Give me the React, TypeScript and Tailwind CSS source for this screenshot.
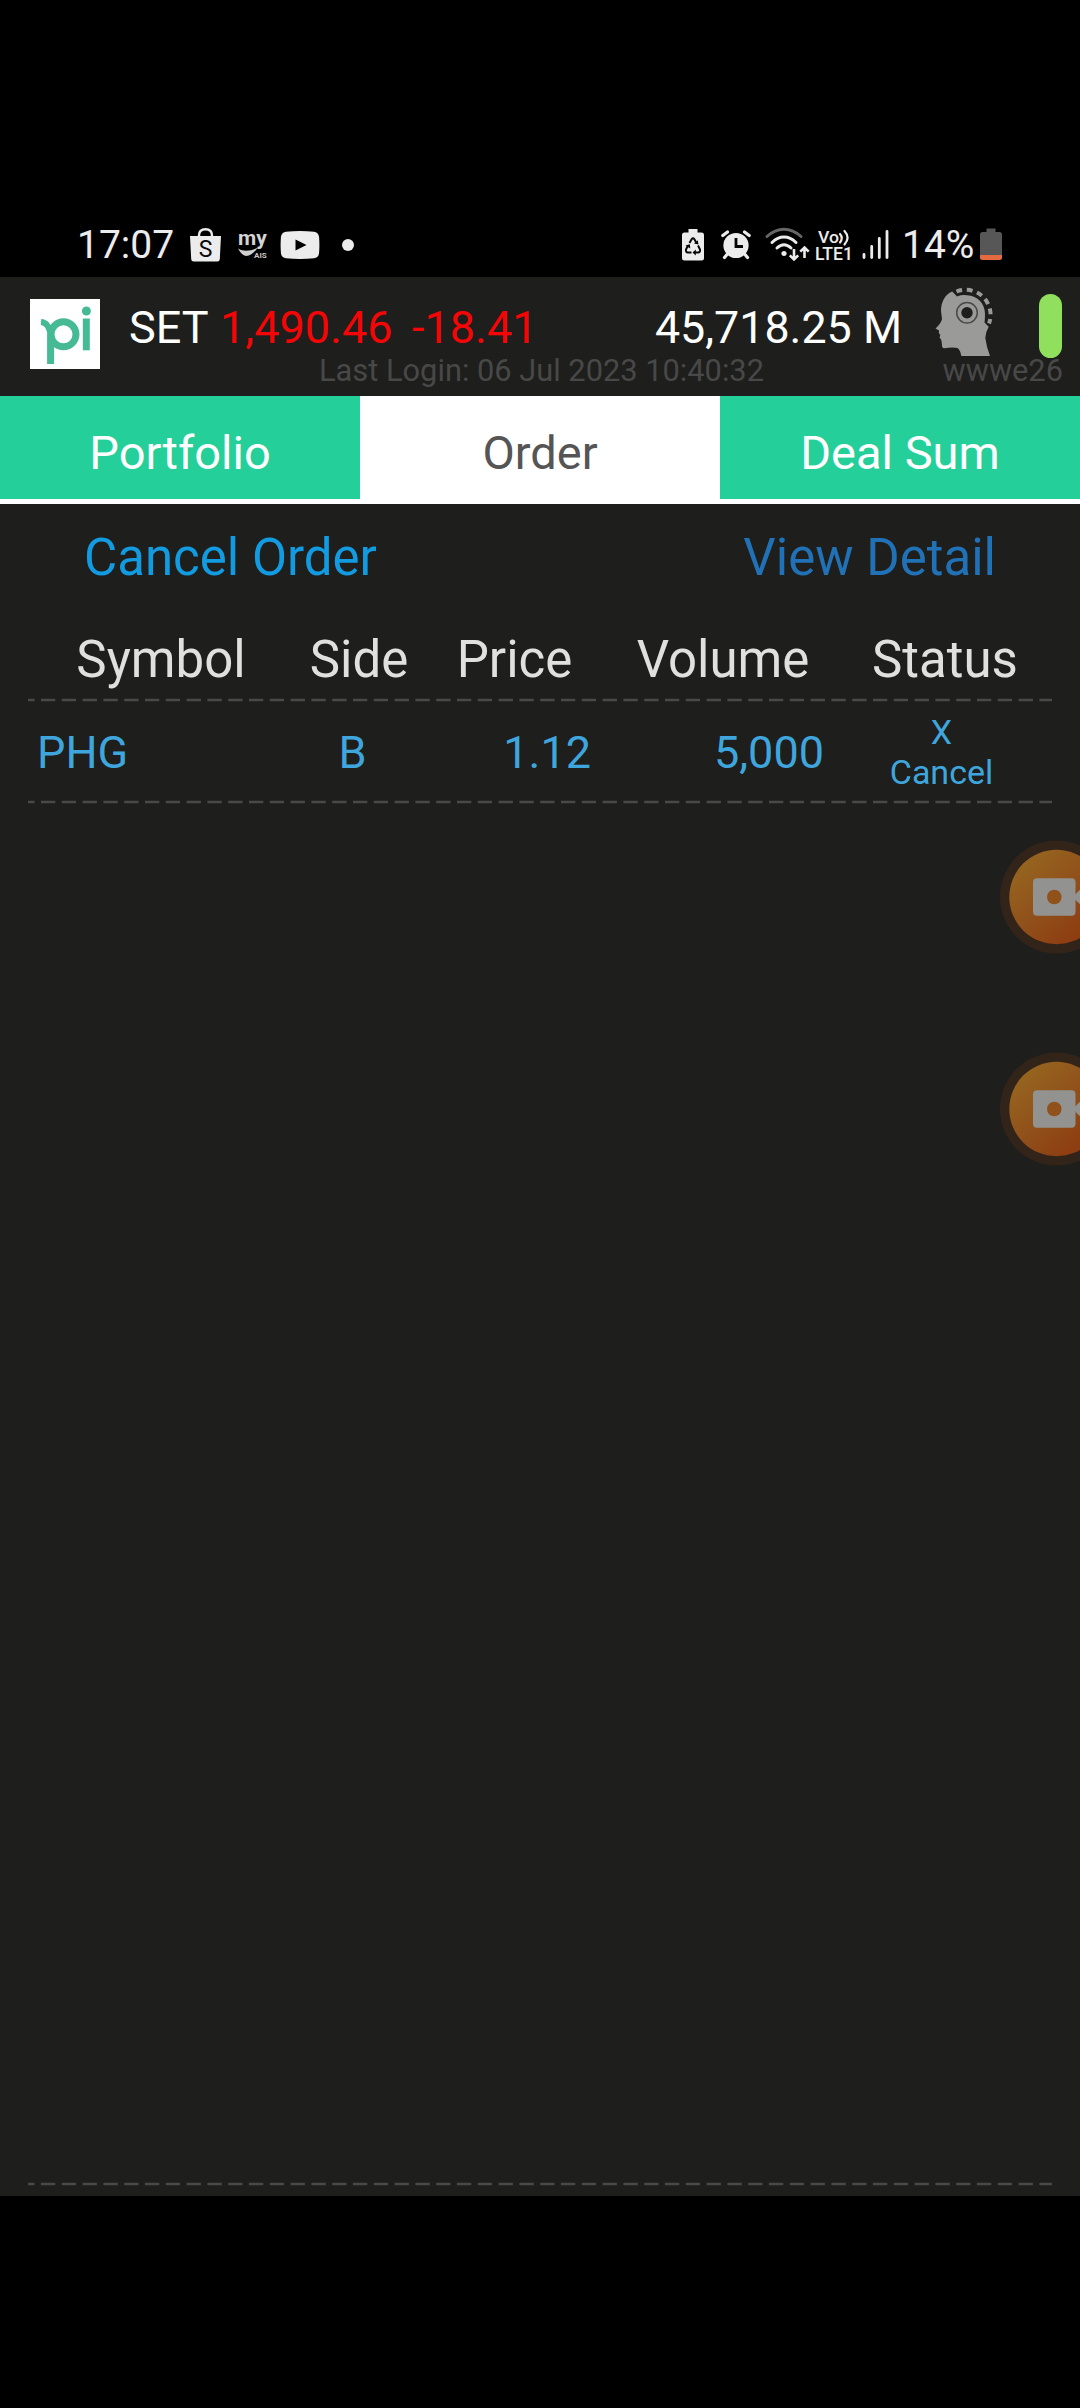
import React from 'react';

interface Order {
  symbol: string;
  side: string;
  price: string;
  volume: string;
  status: string[];
}

const TABS = ['Portfolio', 'Order', 'Deal Sum'];

const ORDERS: Order[] = [
  { symbol: 'PHG', side: 'B', price: '1.12', volume: '5,000', status: ['X', 'Cancel'] },
];

const COLS = 'grid grid-cols-[266px_130px_184px_230px_214px] mx-[28px]';

const ShopIcon = () => (
  <svg width="31" height="48" viewBox="0 0 31 48" className="ml-[17px] shrink-0">
    <path d="M9 17V14.5C9 10.500 11.500 8.200 15.500 8.200S22 10.500 22 14.500V17" fill="none" stroke="#ececec" strokeWidth="2.400" />
    <path d="M0 15h31l-1.200 23.200a2.500 2.500 0 0 1-2.500 2.300H3.700a2.500 2.500 0 0 1-2.500-2.300z" fill="#ececec" />
    <text x="15.500" y="36" textAnchor="middle" fontSize="23" fontFamily="Roboto, sans-serif" fill="#0a0a0a">S</text>
  </svg>
);

const MyAisIcon = () => (
  <svg width="34" height="48" viewBox="-2 0 34 48" className="-mr-[2px] ml-[15px] shrink-0 overflow-visible">
    <text x="0" y="23.500" fontSize="21" fontWeight="700" fontFamily="Roboto, sans-serif" fill="#d4d4d4">my</text>
    <path d="M0 27.500C6 31 13 30 20 26.500C16 32 12 35 8 35C4 34 2 31 0 27.500Z" fill="#d0d0d0" />
    <text x="16" y="37" fontSize="8" fontWeight="700" fontFamily="Roboto, sans-serif" fill="#c8c8c8">AIS</text>
  </svg>
);

const VideoIcon = () => (
  <svg width="40" height="48" viewBox="0 0 40 48" className="ml-[12px] shrink-0">
    <path d="M6 10.700Q20 9.500 34 10.700Q38.300 11.200 39 15.500Q39.800 24 39 32.500Q38.300 36.800 34 37.300Q20 38.500 6 37.300Q1.700 36.800 1 32.500Q.2 24 1 15.500Q1.700 11.200 6 10.700Z" fill="#ececec" />
    <path d="M15.500 18.500L26.500 24L15.500 29.500Z" fill="#000" />
  </svg>
);

const BatteryRecycleIcon = () => (
  <svg width="22" height="48" viewBox="0 0 22 48" className="shrink-0">
    <path d="M6.500 8h9v3.500H19.500a2.500 2.500 0 0 1 2.500 2.500V37a2.500 2.500 0 0 1-2.500 2.500H2.500A2.500 2.500 0 0 1 0 37V14a2.500 2.500 0 0 1 2.500-2.500H6.500z" fill="#ececec" />
    <g fill="none" stroke="#050505" strokeWidth="1.900" strokeLinejoin="round">
      <path d="M7.500 22L9.600 18.200Q11 16.200 12.400 18.200L14.500 22" />
      <path d="M16 24.500L18 28.500Q18.600 31.300 16 31.500H12.500" />
      <path d="M9.500 31.500H6Q3.400 31.300 4 28.500L6 24.500" />
    </g>
    <path d="M12 22.500l4.500 1-.8-4.300zM13.800 28.500v6l-3.300-3zM3.500 24.500l4.300-1.200.5 4.300z" fill="#050505" />
  </svg>
);

const AlarmIcon = () => (
  <svg width="30" height="48" viewBox="0 0 30 48" className="ml-[17px] shrink-0">
    <circle cx="15" cy="24.500" r="12.600" fill="#ececec" />
    <g fill="none" stroke="#ececec" strokeWidth="3.200" strokeLinecap="round">
      <path d="M1.800 14.500L6.500 11M28.200 14.500L23.500 11" />
      <path d="M6 33.500L3.500 36.500M24 33.500L26.500 36.500" />
    </g>
    <path d="M15 17v8.500h7" fill="none" stroke="#050505" strokeWidth="2.800" />
  </svg>
);

const WifiIcon = () => (
  <svg width="45" height="48" viewBox="0 0 45 48" className="ml-[14px] shrink-0">
    <g fill="none" strokeWidth="3" strokeLinecap="round">
      <path d="M2 15.500C12.500 5.800 25.500 5.800 36 15.500" stroke="#666" />
      <path d="M7 21.500C14.500 14.200 23.500 14.200 31 21.500" stroke="#ececec" />
      <path d="M12 27C16.500 22.800 21.500 22.800 26 27" stroke="#ececec" />
    </g>
    <circle cx="19" cy="32.500" r="2.600" fill="#ececec" />
    <g fill="none" stroke="#ececec" strokeWidth="2.600">
      <path d="M29 28v10M24.800 34.300L29 38.500l4.200-4.200" />
      <path d="M39.500 37V27M35.300 30.700l4.200-4.200 4.200 4.200" />
    </g>
  </svg>
);

const VolteIcon = () => (
  <svg width="38" height="48" viewBox="0 0 38 48" className="ml-[5px] shrink-0">
    <g fontFamily="Roboto, sans-serif" fontWeight="500" fill="#ececec">
      <text x="3" y="22" fontSize="17" textLength="21" lengthAdjust="spacingAndGlyphs">Vo</text>
      <text x="0" y="39" fontSize="18" textLength="38" lengthAdjust="spacingAndGlyphs">LTE1</text>
    </g>
    <path d="M25 13Q28.500 17 25 21.500M29.500 10Q35.500 16.500 29.500 23.500" fill="none" stroke="#ececec" strokeWidth="2.200" strokeLinecap="round" />
  </svg>
);

const SignalIcon = () => (
  <svg width="28" height="48" viewBox="0 0 28 48" className="ml-[9px] shrink-0">
    <g stroke="#ececec" strokeWidth="2.800" strokeLinecap="round">
      <path d="M2 33.500V36.500M9.700 25.500V36.500M17.300 17.500V36.500" />
      <path d="M25 10.500V36.500" />
    </g>
  </svg>
);

const BatteryIcon = () => (
  <svg width="22" height="48" viewBox="0 0 22 48" className="shrink-0">
    <path d="M6.500 7.500h9V11H19.500a2.500 2.500 0 0 1 2.500 2.500V34H0V13.500A2.500 2.500 0 0 1 2.500 11H6.500z" fill="#575757" />
    <path d="M0 34h22v2.500a2.500 2.500 0 0 1-2.500 2.500H2.500A2.500 2.500 0 0 1 0 36.500z" fill="#e56a40" />
  </svg>
);

const PiLogo = () => (
  <svg width="70" height="70" viewBox="0 0 70 70" className="shrink-0 bg-white">
    <g fill="none" stroke="#45ba94" strokeWidth="7">
      <circle cx="33.500" cy="35.300" r="12.500" />
      <path d="M20.600 35V65" />
      <path d="M11 23Q18.500 23.500 20.600 35" strokeWidth="6" />
      <path d="M56.300 19.500V51.300" />
    </g>
    <circle cx="56.400" cy="12" r="4.500" fill="#45ba94" />
  </svg>
);

const HeadIcon = () => (
  <svg width="64" height="72" viewBox="0 0 64 72" className="shrink-0">
    <path
      d="M20.200 6.500L25 11.500Q30 9.500 35 10.300C46 10.800 53 19 53 29Q53 34 52.500 37.500L56.700 41.700Q53.500 47 53.300 53Q54.500 62 58 71H29.300Q28.500 65.500 25.700 63Q20 61.800 12.500 63.300Q9.500 63 10 59.500L9.300 55L7.600 52.500L8.300 50L6.800 48L7 45.500L3.500 43.500Q9 38.500 10 34L9 26C9 17 13 9.500 20.200 6.500Z"
      fill="#9a9a98"
    />
    <circle cx="35" cy="27.700" r="10.300" fill="none" stroke="#4a4a49" strokeWidth="1.500" />
    <circle cx="35" cy="27.700" r="5.700" fill="#1e1e1c" />
    <path d="M24.500 6.500A25 25 0 0 1 57 38.500" fill="none" stroke="#9a9a98" strokeWidth="4" strokeDasharray="5.800 4.700" />
  </svg>
);

const RecordBubble = ({ id }: { id: string }) => (
  <svg width="80" height="114" viewBox="0 0 80 114" className="block">
    <defs>
      <linearGradient id={id} x1="0.150" y1="0.100" x2="0.850" y2="0.900">
        <stop offset="0" stopColor="#96651f" />
        <stop offset="0.500" stopColor="#90501a" />
        <stop offset="1" stopColor="#8e3a10" />
      </linearGradient>
    </defs>
    <circle cx="56.500" cy="57" r="56.500" fill="#33241a" />
    <circle cx="56.500" cy="57" r="47.200" fill={`url(#${id})`} />
    <rect x="33" y="38.300" width="42.500" height="37.500" rx="4" fill="#929290" />
    <path d="M74 55.500L84 46V68L74 58.500Z" fill="#929290" />
    <circle cx="54.300" cy="57" r="7.300" fill="#90521a" />
  </svg>
);

const DashedRule = () => (
  <svg width="1024" height="4" viewBox="0 0 1024 4" className="mx-[28px] block">
    <line x1="0" y1="2" x2="1024" y2="2" stroke="#494948" strokeWidth="2.400" strokeDasharray="14.300 6.500" strokeDashoffset="7.800" />
  </svg>
);

const StatusBar = () => (
  <div className="flex h-[277px] items-start bg-black pt-[221px] text-[39px] leading-[48px] text-[#ececec]">
    <div className="flex w-[682px] items-center pl-[77px]">
      <span className="w-[96px] whitespace-nowrap">17:07</span>
      <ShopIcon />
      <MyAisIcon />
      <VideoIcon />
      <span className="ml-[22px] h-[12px] w-[12px] rounded-full bg-[#ececec]" />
    </div>
    <div className="flex items-center">
      <BatteryRecycleIcon />
      <AlarmIcon />
      <WifiIcon />
      <VolteIcon />
      <SignalIcon />
      <span className="ml-[12px] w-[78px] whitespace-nowrap">14%</span>
      <BatteryIcon />
    </div>
  </div>
);

const MarketHeader = () => (
  <header className="relative flex h-[119px] items-start text-[45px] leading-[54px] text-white">
    <div className="flex w-[129px] pt-[22px] pl-[30px]">
      <PiLogo />
    </div>
    <div className="flex w-[803px] items-center justify-between pt-[24px] whitespace-pre">
      <div className="flex">
        <span className="w-[91px]">SET</span>
        <span className="w-[192px] text-[#f40606]">1,490.46</span>
        <span className="text-[#f40606]">-18.41</span>
      </div>
      <span className="pr-[30px] text-[44.8px]">45,718.25 M</span>
    </div>
    <div className="pt-[8px]">
      <HeadIcon />
    </div>
    <div className="mt-[17px] ml-[43px] h-[64px] w-[23px] rounded-[12px] bg-[#90e05e]" />
    {/* session line runs underneath the quote row */}
    <div className="absolute top-[75px] right-[17px] left-[319px] flex justify-between text-[30.8px] leading-[38px] text-[#484848]">
      <span>Last Login: 06 Jul 2023 10:40:32</span>
      <span>wwwe26</span>
    </div>
  </header>
);

const TabBar = ({ active }: { active: string }) => (
  <nav className="grid h-[108px] grid-cols-3 border-b-[5px] border-white text-center text-[47px] leading-[114px]">
    {TABS.map((tab) => (
      <button
        key={tab}
        type="button"
        className={tab === active ? 'h-[103px] bg-white text-[#555]' : 'h-[103px] bg-[#24cf9a] text-white'}
      >
        {tab}
      </button>
    ))}
  </nav>
);

const OrderTable = ({ orders }: { orders: Order[] }) => (
  <section>
    <div className={`${COLS} pb-[8px] text-center text-[51px] leading-[60px] text-[#e0e0df]`}>
      <span>Symbol</span>
      <span>Side</span>
      <span className="pr-[3px]">Price</span>
      <span>Volume</span>
      <span>Status</span>
    </div>
    <DashedRule />
    {orders.map((o) => (
      <div key={o.symbol}>
        <div className={`${COLS} h-[98px] items-center pt-[4px] text-[45px] leading-[54px] text-[#3ea6dd]`}>
          <span className="pl-[9px]">{o.symbol}</span>
          <span className="pr-[13px] text-center">{o.side}</span>
          <span className="pr-[17px] text-right">{o.price}</span>
          <span className="pr-[14px] text-right">{o.volume}</span>
          <span className="flex flex-col pr-[7px] pb-[2px] text-center text-[34px] leading-[40px]">
            {o.status.map((line) => (
              <span key={line}>{line}</span>
            ))}
          </span>
        </div>
        <DashedRule />
      </div>
    ))}
  </section>
);

export default function App() {
  return (
    <div className="relative flex h-[2408px] w-[1080px] flex-col overflow-hidden bg-black font-[Roboto,sans-serif]">
      <StatusBar />
      <main className="flex h-[1919px] flex-col bg-[#1e1e1c]">
        <MarketHeader />
        <TabBar active="Order" />
        <div className="flex h-[126px] justify-between pt-[24px] pr-[84px] pl-[84px] text-[51px] leading-[60px]">
          <span className="text-[#129be0]">Cancel Order</span>
          <span className="text-[#2171b7]">View Detail</span>
        </div>
        <OrderTable orders={ORDERS} />
        <div className="mt-auto pb-[10px]">
          <DashedRule />
        </div>
      </main>
      {/* screen recorder bubbles float over the app */}
      <div className="absolute top-[840px] right-0 flex flex-col gap-[98px]">
        <RecordBubble id="rec-a" />
        <RecordBubble id="rec-b" />
      </div>
    </div>
  );
}
